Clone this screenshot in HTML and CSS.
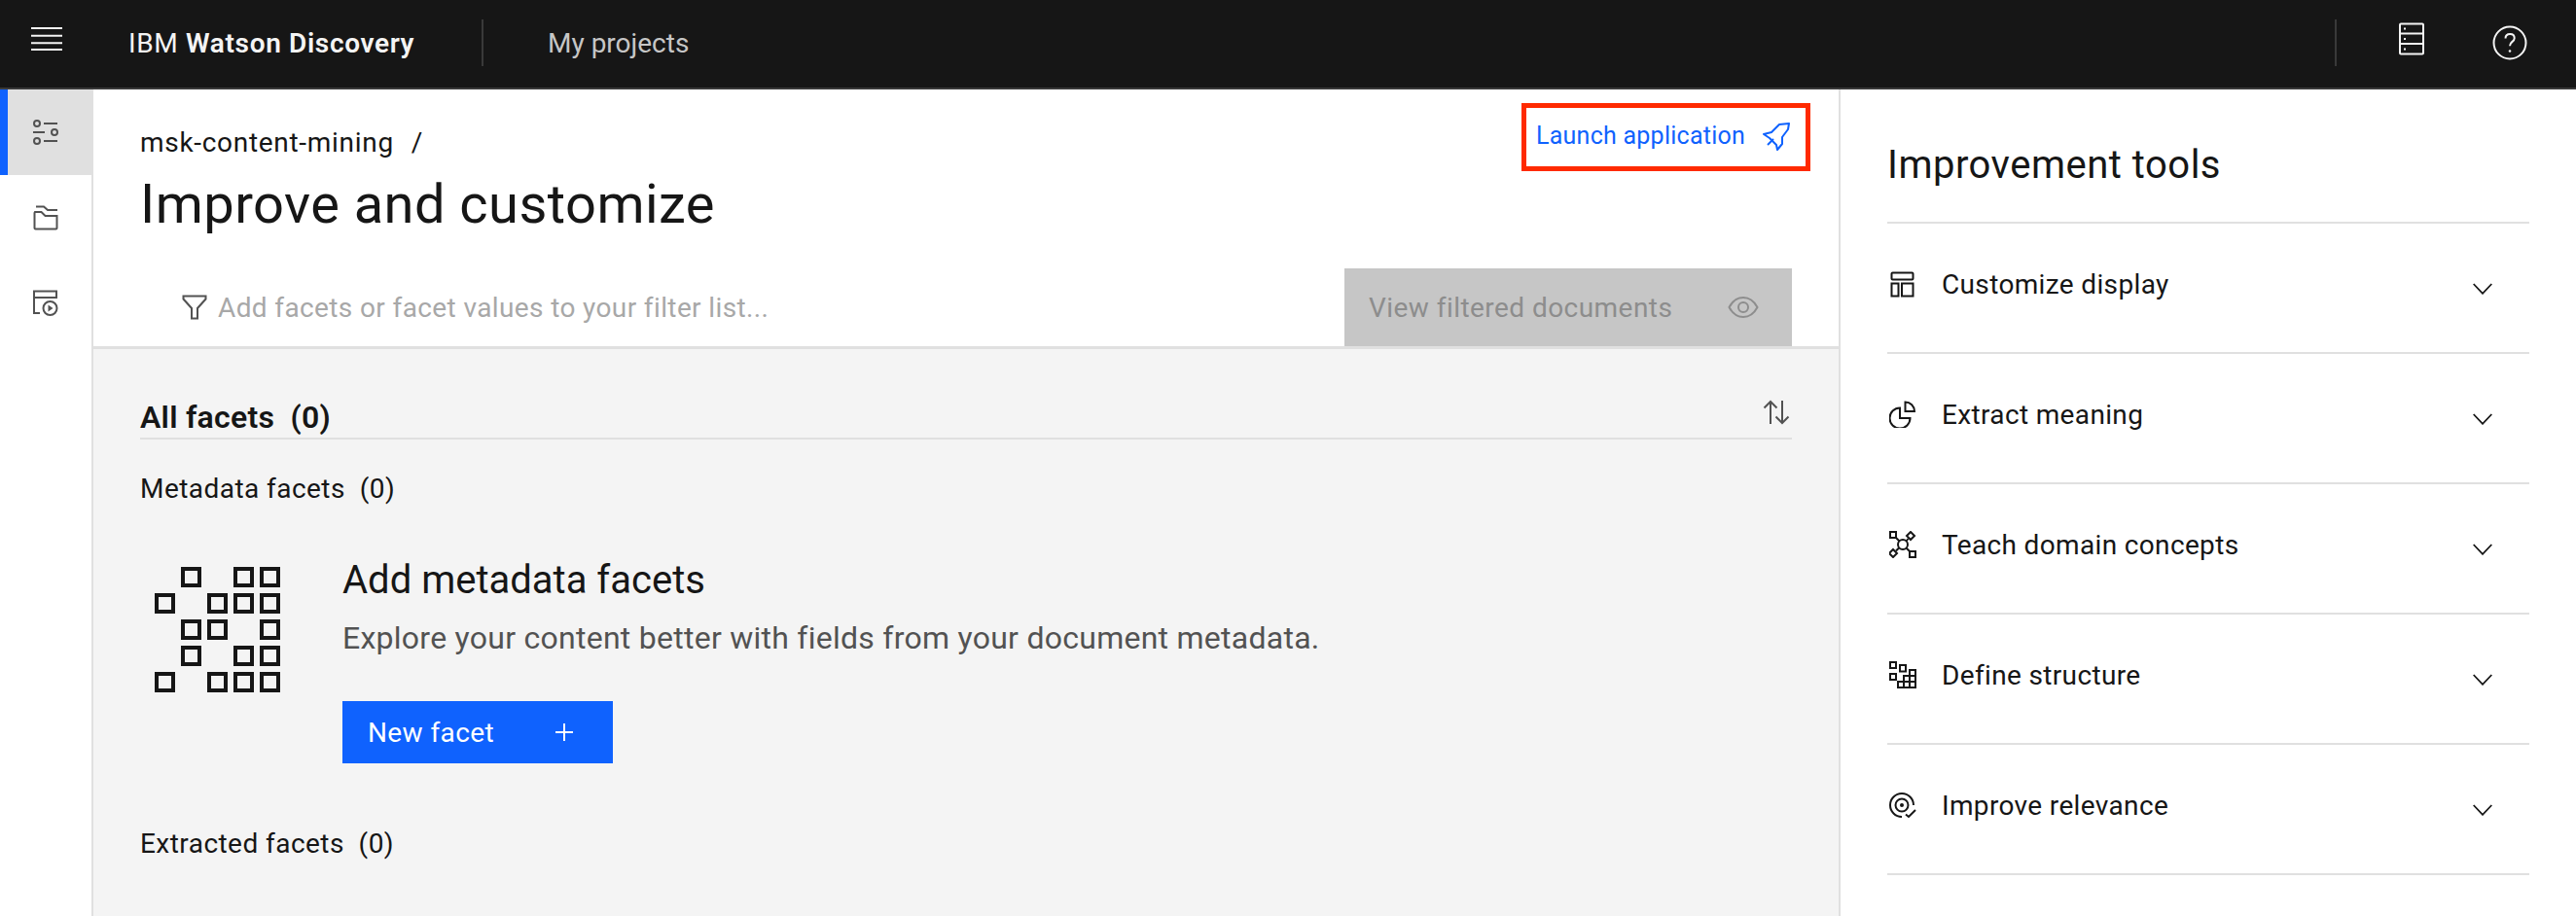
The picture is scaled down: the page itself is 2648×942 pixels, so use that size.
FILE: index.html
```html
<!DOCTYPE html>
<html lang="en">
<head>
<meta charset="utf-8">
<title>IBM Watson Discovery</title>
<link rel="stylesheet" href="styles.css">
</head>
<body>
<header class="topbar">
  <svg class="menu-icon" width="32" height="24" viewBox="0 0 32 24"><path d="M0 1h32M0 8.700h32M0 16.300h32M0 23h32" stroke="#f4f4f4" stroke-width="2"/></svg>
  <div class="brand">IBM <b>Watson Discovery</b></div>
  <div class="bar-divider"></div>
  <div class="bar-link">My projects</div>
  <div class="bar-spacer"></div>
  <div class="bar-divider"></div>
  <svg class="server-icon" width="26" height="34" viewBox="0 0 26 34" fill="none" stroke="#f4f4f4" stroke-width="2"><rect x="1" y="1.500" width="24" height="31" rx="1"/><path d="M1 11.500h24M1 22h24M5 6.500h2M5 17h2M5 27.500h2"/></svg>
  <svg class="help-icon" width="36" height="36" viewBox="0 0 36 36" fill="none" stroke="#f4f4f4" stroke-width="2"><circle cx="18" cy="18" r="16.500"/><path d="M13.500 13.500c0-2.800 2-4.500 4.700-4.500s4.500 1.800 4.500 4.200c0 3.800-4.700 3.600-4.700 8"/><circle cx="18" cy="26.500" r="1.300" fill="#f4f4f4" stroke="none"/></svg>
</header>
<div class="body">
  <nav class="rail">
    <div class="rail-item active">
      <svg width="28" height="28" viewBox="0 0 28 28" fill="none" stroke="#525252" stroke-width="2"><circle cx="5" cy="5" r="3"/><path d="M12 5h14M1 14h12"/><circle cx="23" cy="14" r="3"/><circle cx="5" cy="23" r="3"/><path d="M12 23h14"/></svg>
    </div>
    <div class="rail-item">
      <svg width="26" height="26" viewBox="0 0 26 26" fill="none" stroke="#525252" stroke-width="2"><path d="M3 1.500h8l4 3.500h10"/><path d="M1.500 8v15.500a1 1 0 0 0 1 1h21a1 1 0 0 0 1-1V11h-12l-4-4H2z"/></svg>
    </div>
    <div class="rail-item">
      <svg width="28" height="28" viewBox="0 0 28 28" fill="none" stroke="#525252" stroke-width="2"><path d="M8 24H2V1.500h23V9M2 8h23"/><circle cx="18.500" cy="19" r="7"/><path d="M16.500 15.500l5 3.500-5 3.500z" fill="#525252" stroke="none"/></svg>
    </div>
  </nav>
  <main class="main">
    <section class="head">
      <div class="crumb">msk-content-mining<span class="crumb-sep">/</span></div>
      <h1 class="title">Improve and customize</h1>
      <div class="filter-row">
        <div class="filter-field">
          <svg width="26" height="26" viewBox="0 0 26 26" fill="none" stroke="#525252" stroke-width="2"><path d="M1.500 1.500h23v3L16 14v10.500h-6V14L1.500 4.500z"/></svg>
          <span>Add facets or facet values to your filter list...</span>
        </div>
        <div class="view-btn">
          <span>View filtered documents</span>
          <svg width="32" height="24" viewBox="0 0 32 24" fill="none" stroke="#8d8d8d" stroke-width="2"><path d="M1.500 12C5 5.500 10 2 16 2s11 3.500 14.500 10C27 18.500 22 22 16 22S5 18.500 1.500 12z"/><circle cx="16" cy="12" r="5"/></svg>
        </div>
      </div>
      <a class="launch">
        <span>Launch application</span>
        <svg width="30" height="30" viewBox="0 0 30 30" fill="none" stroke="#0f62fe" stroke-width="2" stroke-linejoin="round"><path d="M28 2L18 3l-8 8-8 2 6 4 7 7 1 5 5-6v-7l6-8z"/><path d="M6 24l6-6"/></svg>
      </a>
    </section>
    <section class="facets">
      <div class="facets-head">
        <h2>All facets&nbsp; (0)</h2>
        <svg width="28" height="26" viewBox="0 0 28 26" fill="none" stroke="#525252" stroke-width="2"><path d="M8 25V2M1.500 8.500L8 2l6.500 6.500M20 1v23M13.500 17.500L20 24l6.500-6.500"/></svg>
      </div>
      <div class="sub">Metadata facets&nbsp; (0)</div>
      <div class="empty">
        <svg class="picto" width="130" height="130" viewBox="0 0 130 130" fill="none" stroke="#161616" stroke-width="4">
          <rect x="29" y="2" width="17" height="17"/><rect x="83" y="2" width="17" height="17"/><rect x="110" y="2" width="17" height="17"/>
          <rect x="2" y="29" width="17" height="17"/><rect x="56" y="29" width="17" height="17"/><rect x="83" y="29" width="17" height="17"/><rect x="110" y="29" width="17" height="17"/>
          <rect x="29" y="56" width="17" height="17"/><rect x="56" y="56" width="17" height="17"/><rect x="110" y="56" width="17" height="17"/>
          <rect x="29" y="83" width="17" height="17"/><rect x="83" y="83" width="17" height="17"/><rect x="110" y="83" width="17" height="17"/>
          <rect x="2" y="110" width="17" height="17"/><rect x="56" y="110" width="17" height="17"/><rect x="83" y="110" width="17" height="17"/><rect x="110" y="110" width="17" height="17"/>
        </svg>
        <div class="empty-text">
          <h3>Add metadata facets</h3>
          <p>Explore your content better with fields from your document metadata.</p>
          <div class="new-btn"><span>New facet</span><svg width="18" height="18" viewBox="0 0 18 18" stroke="#fff" stroke-width="2"><path d="M9 0v18M0 9h18"/></svg></div>
        </div>
      </div>
      <div class="sub extracted">Extracted facets&nbsp; (0)</div>
    </section>
  </main>
  <aside class="tools">
    <h2>Improvement tools</h2>
    <div class="tool">
      <svg width="28" height="28" viewBox="0 0 28 28" fill="none" stroke="#161616" stroke-width="2"><rect x="2.500" y="2.500" width="22" height="7" rx="1"/><rect x="2.500" y="13.500" width="7" height="13"/><rect x="13" y="13.500" width="11.500" height="13"/></svg>
      <span>Customize display</span>
      <svg class="chev" width="20" height="12" viewBox="0 0 20 12" fill="none" stroke="#161616" stroke-width="1.800"><path d="M.7 1l9.300 9.800L19.300 1"/></svg>
    </div>
    <div class="tool">
      <svg width="28" height="28" viewBox="0 0 28 28" fill="none" stroke="#161616" stroke-width="2"><path d="M11 7.500A10.500 10.500 0 1 0 21.500 18H11z"/><path d="M16.500 1.500a9.500 9.500 0 0 1 9.500 9.500h-9.500z"/></svg>
      <span>Extract meaning</span>
      <svg class="chev" width="20" height="12" viewBox="0 0 20 12" fill="none" stroke="#161616" stroke-width="1.800"><path d="M.7 1l9.300 9.800L19.300 1"/></svg>
    </div>
    <div class="tool">
      <svg width="28" height="28" viewBox="0 0 28 28" fill="none" stroke="#161616" stroke-width="2"><rect x="1" y="1" width="6" height="6"/><path d="M22 1l4 4-4 4-4-4z"/><path d="M4 19l4 4-4 4-4-4z"/><rect x="21" y="21" width="6" height="6"/><circle cx="14" cy="14" r="5"/><path d="M7 7l3.500 3.500M19.500 8l-2 2.500M7 20.500l3-3M17.500 17.500l3.500 3.500"/></svg>
      <span>Teach domain concepts</span>
      <svg class="chev" width="20" height="12" viewBox="0 0 20 12" fill="none" stroke="#161616" stroke-width="1.800"><path d="M.7 1l9.300 9.800L19.300 1"/></svg>
    </div>
    <div class="tool">
      <svg width="28" height="28" viewBox="0 0 28 28" fill="none" stroke="#161616" stroke-width="2"><rect x="1" y="1" width="6" height="6"/><rect x="11" y="4" width="6" height="6.500"/><rect x="1" y="13" width="6" height="6"/><path d="M21 9h6v18H9v-6h6v-6h6zM21 15h6M15 21h12M15 21v6M21 15v12"/></svg>
      <span>Define structure</span>
      <svg class="chev" width="20" height="12" viewBox="0 0 20 12" fill="none" stroke="#161616" stroke-width="1.800"><path d="M.7 1l9.300 9.800L19.300 1"/></svg>
    </div>
    <div class="tool">
      <svg width="28" height="28" viewBox="0 0 28 28" fill="none" stroke="#161616" stroke-width="2"><path d="M13 26A12 12 0 1 1 25 14"/><circle cx="13" cy="14" r="6.500"/><circle cx="13" cy="14" r="2" fill="#161616" stroke="none"/><path d="M17 23.500l3 2.500 7-7"/></svg>
      <span>Improve relevance</span>
      <svg class="chev" width="20" height="12" viewBox="0 0 20 12" fill="none" stroke="#161616" stroke-width="1.800"><path d="M.7 1l9.300 9.800L19.300 1"/></svg>
    </div>
  </aside>
</div>
</body>
</html>
```
FILE: styles.css
```css
* { box-sizing: border-box; }
html, body { margin: 0; height: 942px; overflow: hidden; background: #fff; }
body { font-family: Roboto, "Liberation Sans", sans-serif; color: #161616; display: flex; flex-direction: column; }
h1, h2, h3, p { margin: 0; font-weight: 400; }
svg { display: block; flex: none; }

.topbar { height: 92px; flex: none; background: #161616; border-bottom: 2px solid #393939; display: flex; align-items: center; color: #f4f4f4; font-size: 28px; padding: 0 0 2px 32px; }
.menu-icon { margin-right: 68px; margin-top: -8px; }
.brand { width: 363px; white-space: nowrap; letter-spacing: .65px; }
.brand b { font-weight: 600; }
.bar-divider { width: 2px; height: 48px; background: #393939; }
.bar-link { margin-left: 66px; color: #c6c6c6; letter-spacing: 0; }
.bar-spacer { flex: 1; }
.server-icon { margin-left: 64px; margin-top: -8px; }
.help-icon { margin-left: 70px; margin-right: 50px; margin-top: -1px; }

.body { flex: 1; display: flex; min-height: 0; }
.rail { width: 96px; flex: none; border-right: 2px solid #e0e0e0; }
.rail-item { height: 88px; display: flex; align-items: center; justify-content: center; }
.rail-item.active { background: #e0e0e0; border-left: 8px solid #0f62fe; padding-right: 8px; }

.main { flex: 1; min-width: 0; display: flex; flex-direction: column; position: relative; }
.head { height: 267px; flex: none; padding: 37px 48px 0 48px; border-bottom: 3px solid #e0e0e0; display: flex; flex-direction: column; }
.crumb { font-size: 28px; line-height: 36px; letter-spacing: .7px; }
.crumb-sep { margin-left: 18px; }
.title { font-size: 56px; line-height: 72px; margin-top: 9px; letter-spacing: .45px; }
.filter-row { margin-top: 30px; height: 80px; display: flex; align-items: center; justify-content: space-between; }
.filter-field { display: flex; align-items: center; gap: 11px; padding-left: 43px; font-size: 28px; color: #a8a8a8; letter-spacing: .38px; }
.view-btn { width: 460px; height: 80px; background: #c6c6c6; color: #8d8d8d; font-size: 28px; letter-spacing: .45px; display: flex; align-items: center; justify-content: space-between; padding: 0 34px 0 25px; }
.launch { position: absolute; left: 1468px; top: 14px; width: 297px; height: 70px; border: 5px solid #ff2a00; color: #0f62fe; font-size: 25px; display: flex; align-items: center; justify-content: space-between; padding: 0 15px 3px 10px; letter-spacing: .25px; }

.facets { flex: 1; background: #f4f4f4; padding: 0 48px; }
.facets-head { height: 93px; border-bottom: 2px solid #e0e0e0; display: flex; align-items: flex-end; justify-content: space-between; padding-bottom: 1px; }
.facets-head h2 { font-size: 32px; font-weight: 600; line-height: 40px; letter-spacing: .25px; }
.facets-head svg { margin-bottom: 12px; margin-right: 2px; }
.sub { font-size: 28px; line-height: 36px; margin-top: 33px; letter-spacing: .45px; }
.empty { display: flex; margin-top: 62px; margin-left: 15px; }
.empty-text { margin-left: 63px; margin-top: -10px; }
.empty-text h3 { font-size: 40px; line-height: 48px; letter-spacing: 0; }
.empty-text p { font-size: 32px; line-height: 40px; color: #525252; margin-top: 15px; letter-spacing: .26px; }
.new-btn { margin-top: 45px; width: 278px; height: 64px; background: #0f62fe; color: #fff; font-size: 28px; display: flex; align-items: center; justify-content: space-between; padding: 0 41px 0 26px; letter-spacing: .4px; }
.extracted { margin-top: 65px; }

.tools { width: 758px; flex: none; border-left: 2px solid #e0e0e0; padding: 0 48px; }
.tools h2 { font-size: 40px; line-height: 48px; height: 138px; padding-top: 54px; border-bottom: 2px solid #e0e0e0; letter-spacing: .5px; }
.tool { height: 134px; border-bottom: 2px solid #e0e0e0; display: flex; align-items: center; font-size: 28px; letter-spacing: .35px; padding: 0 38px 8px 2px; }
.tool span { flex: 1; margin-left: 26px; }
.chev { margin-top: 10px; }
```
